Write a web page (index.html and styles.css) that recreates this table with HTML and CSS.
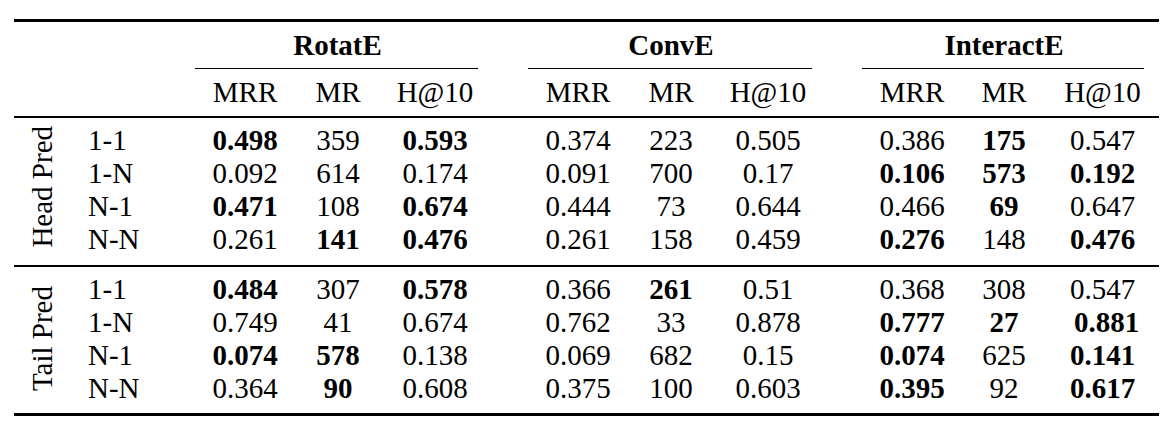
FILE: index.html
```html
<!DOCTYPE html>
<html>
<head>
<meta charset="utf-8">
<link rel="stylesheet" href="styles.css">
</head>
<body>
<div class="tbl">
  <div class="sec head">
    <div class="grp g1"><div class="cm cm1">RotatE</div></div>
    <div class="grp g2"><div class="cm cm2">ConvE</div></div>
    <div class="grp g3"><div class="cm cm3">InteractE</div></div>
    <div class="c r1 h2">MRR</div><div class="c r2 h2">MR</div><div class="c r3 h2">H@10</div>
    <div class="c c1 h2">MRR</div><div class="c c2 h2">MR</div><div class="c c3 h2">H@10</div>
    <div class="c i1 h2">MRR</div><div class="c i2 h2">MR</div><div class="c i3 h2">H@10</div>
  </div>

  <div class="sec body first">
    <div class="lbl"><span>Head Pred</span></div>
    <div class="t">1-1</div>
    <div class="c r1 b">0.498</div><div class="c r2">359</div><div class="c r3 b">0.593</div>
    <div class="c c1">0.374</div><div class="c c2">223</div><div class="c c3">0.505</div>
    <div class="c i1">0.386</div><div class="c i2 b">175</div><div class="c i3">0.547</div>

    <div class="t">1-N</div>
    <div class="c r1">0.092</div><div class="c r2">614</div><div class="c r3">0.174</div>
    <div class="c c1">0.091</div><div class="c c2">700</div><div class="c c3">0.17</div>
    <div class="c i1 b">0.106</div><div class="c i2 b">573</div><div class="c i3 b">0.192</div>

    <div class="t">N-1</div>
    <div class="c r1 b">0.471</div><div class="c r2">108</div><div class="c r3 b">0.674</div>
    <div class="c c1">0.444</div><div class="c c2">73</div><div class="c c3">0.644</div>
    <div class="c i1">0.466</div><div class="c i2 b">69</div><div class="c i3">0.647</div>

    <div class="t">N-N</div>
    <div class="c r1">0.261</div><div class="c r2 b">141</div><div class="c r3 b">0.476</div>
    <div class="c c1">0.261</div><div class="c c2">158</div><div class="c c3">0.459</div>
    <div class="c i1 b">0.276</div><div class="c i2">148</div><div class="c i3 b">0.476</div>
  </div>

  <div class="sec body last">
    <div class="lbl"><span>Tail Pred</span></div>
    <div class="t">1-1</div>
    <div class="c r1 b">0.484</div><div class="c r2">307</div><div class="c r3 b">0.578</div>
    <div class="c c1">0.366</div><div class="c c2 b">261</div><div class="c c3">0.51</div>
    <div class="c i1">0.368</div><div class="c i2">308</div><div class="c i3">0.547</div>

    <div class="t">1-N</div>
    <div class="c r1">0.749</div><div class="c r2">41</div><div class="c r3">0.674</div>
    <div class="c c1">0.762</div><div class="c c2">33</div><div class="c c3">0.878</div>
    <div class="c i1 b">0.777</div><div class="c i2 b">27</div><div class="c i3 b nudge">0.881</div>

    <div class="t">N-1</div>
    <div class="c r1 b">0.074</div><div class="c r2 b">578</div><div class="c r3">0.138</div>
    <div class="c c1">0.069</div><div class="c c2">682</div><div class="c c3">0.15</div>
    <div class="c i1 b">0.074</div><div class="c i2">625</div><div class="c i3 b">0.141</div>

    <div class="t">N-N</div>
    <div class="c r1">0.364</div><div class="c r2 b">90</div><div class="c r3">0.608</div>
    <div class="c c1">0.375</div><div class="c c2">100</div><div class="c c3">0.603</div>
    <div class="c i1 b">0.395</div><div class="c i2">92</div><div class="c i3 b">0.617</div>
  </div>
</div>
</body>
</html>
```

FILE: styles.css
```css
html, body {
  margin: 0;
  padding: 0;
  background: #fff;
}
body {
  font-family: "Liberation Serif", "Times New Roman", serif;
  font-size: 29px;
  color: #000;
}
.tbl {
  width: 1145px;
  margin: 19px 0 0 14px;
  border-top: 3px solid #000;
  border-bottom: 3px solid #000;
}
.sec {
  display: grid;
  grid-template-columns: 56px 125px 100px 86px 108px 39px 100px 86px 108px 40px 100px 84px 113px;
}
.head {
  grid-template-rows: 47px 47px;
  border-bottom: 2px solid #000;
}
.body {
  grid-template-rows: repeat(4, 33px);
  padding-top: 6px;
}
.body.first {
  padding-bottom: 9px;
  border-bottom: 2px solid #000;
}
.body.last {
  padding-bottom: 8px;
}
.grp {
  grid-row: 1;
  display: flex;
}
.g1 { grid-column: 3 / 6; }
.g2 { grid-column: 7 / 10; }
.g3 { grid-column: 11 / 14; }
.cm {
  flex: 1;
  font-weight: bold;
  border-bottom: 1.5px solid #000;
  display: flex;
  align-items: center;
  justify-content: center;
  padding-left: 2px;
}
.cm1 { margin-right: 11px; }
.cm2 { margin-right: 10px; }
.cm3 { margin-right: 15px; }
.c {
  display: flex;
  align-items: center;
  justify-content: center;
  white-space: nowrap;
}
.h2 { grid-row: 2; }
.r1 { grid-column: 3; }
.r2 { grid-column: 4; }
.r3 { grid-column: 5; }
.c1 { grid-column: 7; }
.c2 { grid-column: 8; }
.c3 { grid-column: 9; }
.i1 { grid-column: 11; }
.i2 { grid-column: 12; }
.i3 { grid-column: 13; }
.b { font-weight: bold; }
.nudge { padding-left: 8px; }
.t {
  grid-column: 2;
  display: flex;
  align-items: center;
  padding-left: 18px;
  white-space: nowrap;
}
.lbl {
  grid-column: 1;
  grid-row: 1 / 5;
  display: flex;
  align-items: center;
  justify-content: center;
}
.lbl span {
  writing-mode: vertical-rl;
  transform: rotate(180deg);
  white-space: nowrap;
}
.body.first .lbl span {
  margin-bottom: 6px;
}
```
